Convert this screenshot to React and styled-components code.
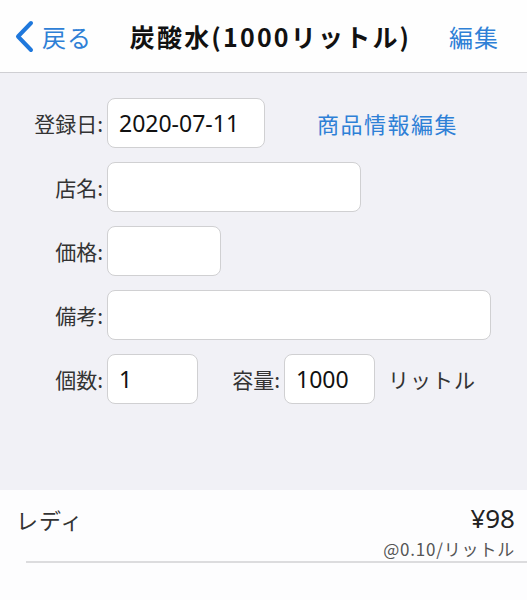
import React from "react";
import styled, { createGlobalStyle } from "styled-components";

const Global = createGlobalStyle`
  html, body { margin: 0; padding: 0; }
  body {
    background: #f1f1f6;
    font-family: "Noto Sans CJK JP", "Noto Sans", sans-serif;
    color: #222;
  }
  * { box-sizing: border-box; }
`;

const Page = styled.div`
  width: 527px;
  height: 600px;
  display: flex;
  flex-direction: column;
  overflow: hidden;
  background: #f1f1f6;
`;

const NavBar = styled.header`
  height: 73px;
  flex: none;
  background: #fefefe;
  border-bottom: 1px solid #cfcfd3;
  display: flex;
  align-items: center;
  justify-content: space-between;
  padding: 0 28px 0 14px;
`;

const NavButton = styled.button`
  display: flex;
  align-items: center;
  gap: 7px;
  border: none;
  background: none;
  padding: 0;
  color: #2e80d6;
  font-family: inherit;
  font-size: 24px;
  letter-spacing: 1px;
  cursor: pointer;
`;

const Title = styled.h1`
  margin: 0;
  font-size: 25px;
  font-weight: 700;
  color: #111;
  letter-spacing: 2.2px;
`;

const Form = styled.section`
  flex: none;
  height: 417px;
  padding-top: 25px;
  display: flex;
  flex-direction: column;
  gap: 14px;
`;

const Row = styled.div`
  display: flex;
  align-items: center;
  height: 50px;
`;

const Label = styled.label`
  width: ${(p) => p.$w || 107}px;
  flex: none;
  text-align: right;
  padding-right: 4px;
  font-size: 21px;
  color: #333;
`;

const Field = styled.div`
  width: ${(p) => p.$w}px;
  height: 50px;
  flex: none;
  background: #fff;
  border: 1.5px solid #d0d0d2;
  border-radius: 8px;
  display: flex;
  align-items: center;
  padding-left: 11px;
  font-family: "Noto Sans", sans-serif;
  font-size: 23px;
  color: #111;
`;

const LinkText = styled.span`
  margin-left: 52px;
  font-size: 22px;
  color: #2e80d6;
  letter-spacing: 1.5px;
`;

const Unit = styled.span`
  margin-left: 13px;
  font-size: 21px;
  color: #333;
  letter-spacing: 1px;
`;

const List = styled.section`
  flex: 1;
  background: #fdfdfe;
`;

const ListRow = styled.div`
  display: flex;
  justify-content: space-between;
  align-items: flex-start;
  padding: 10px 12px 0 16px;
  height: 71px;
`;

const ItemName = styled.div`
  margin-top: 3px;
  font-size: 22px;
  line-height: normal;
  color: #333;
  letter-spacing: 1px;
`;

const PriceBox = styled.div`
  display: flex;
  flex-direction: column;
  align-items: flex-end;
`;

const Price = styled.div`
  font-family: "Noto Sans", sans-serif;
  font-size: 26px;
  line-height: normal;
  color: #222;
`;

const Unitprice = styled.div`
  font-size: 17px;
  line-height: normal;
  color: #555;
  letter-spacing: 0.8px;
`;

const Divider = styled.div`
  height: 1.5px;
  background: #dcdcde;
  margin-left: 26px;
`;

const Chevron = () => (
  <svg width="21" height="33" viewBox="0 0 21 33">
    <path
      d="M17 3 L4 16.5 L17 30"
      fill="none"
      stroke="#1f78dc"
      strokeWidth="4"
      strokeLinecap="round"
      strokeLinejoin="round"
    />
  </svg>
);

export default function App() {
  return (
    <>
      <Global />
      <Page>
        <NavBar>
          <NavButton>
            <Chevron />
            戻る
          </NavButton>
          <Title>炭酸水(1000リットル)</Title>
          <NavButton>編集</NavButton>
        </NavBar>
        <Form>
          <Row>
            <Label>登録日:</Label>
            <Field $w={158}>2020-07-11</Field>
            <LinkText>商品情報編集</LinkText>
          </Row>
          <Row>
            <Label>店名:</Label>
            <Field $w={254} />
          </Row>
          <Row>
            <Label>価格:</Label>
            <Field $w={114} />
          </Row>
          <Row>
            <Label>備考:</Label>
            <Field $w={384} />
          </Row>
          <Row>
            <Label>個数:</Label>
            <Field $w={91}>1</Field>
            <Label $w={86}>容量:</Label>
            <Field $w={91}>1000</Field>
            <Unit>リットル</Unit>
          </Row>
        </Form>
        <List>
          <ListRow>
            <ItemName>レディ</ItemName>
            <PriceBox>
              <Price>¥98</Price>
              <Unitprice>@0.10/リットル</Unitprice>
            </PriceBox>
          </ListRow>
          <Divider />
        </List>
      </Page>
    </>
  );
}
